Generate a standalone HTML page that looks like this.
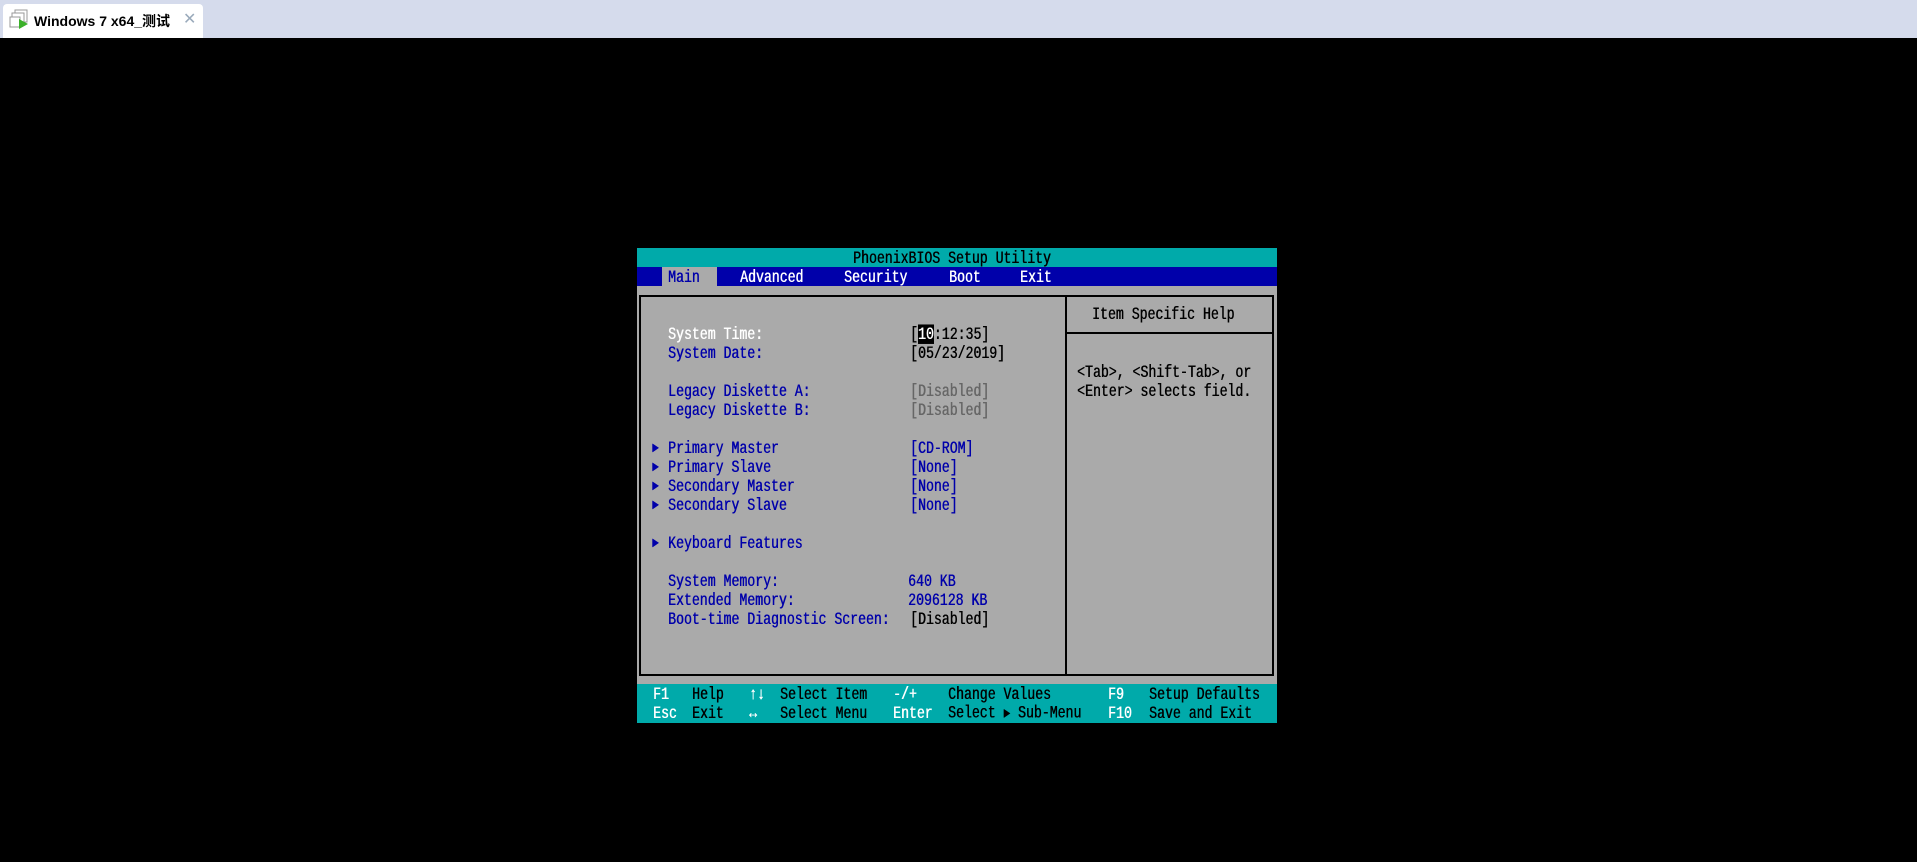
<!DOCTYPE html>
<html><head><meta charset="utf-8"><style>
*{margin:0;padding:0;box-sizing:border-box}
body{width:1917px;height:862px;background:#000;position:relative;overflow:hidden;font-family:"Liberation Mono",monospace}
#top{position:absolute;left:0;top:0;width:1917px;height:38px;background:#d5dbec}
#tab{position:absolute;left:3px;top:4px;width:200px;height:34px;background:#fff;border-radius:4px 4px 0 0}
#tab .t{position:absolute;left:31px;top:7px;font:bold 14px "Liberation Sans","Noto Sans CJK SC",sans-serif;color:#000}
#tab .x{position:absolute;left:180px;top:5px;font:16px "Liberation Sans",sans-serif;color:#9aaabb}
.a{position:absolute;white-space:pre;font-size:13.2px;line-height:19px;height:19px;margin-top:1px;text-shadow:0.4px 0 0 currentColor}
.s{display:inline-block;transform:scaleY(1.3);transform-origin:50% 55%}
.w{color:#fff}.b{color:#0000aa}.k{color:#000}.g{color:#666}
.tri{font-size:11px}
</style></head><body>
<div id="top"><div id="tab">
<svg style="position:absolute;left:6px;top:5px" width="22" height="22" viewBox="0 0 22 22"><rect x="6" y="1" width="12" height="12" fill="#fff" stroke="#999"/><rect x="3" y="4" width="12" height="12" fill="#fff" stroke="#999"/><rect x="1" y="8" width="10" height="10" fill="#fff" stroke="#999"/><path d="M10 10 L19 15 L10 20Z" fill="#3bb02a"/></svg>
<div class="t">Windows 7 x64_测试</div><div class="x">✕</div></div></div>

<div style="position:absolute;left:637px;top:248px;width:640px;height:475px;background:#aaaaaa"></div>
<div style="position:absolute;left:637px;top:248px;width:640px;height:19px;background:#00aaaa"></div>
<div style="position:absolute;left:637px;top:267px;width:640px;height:19px;background:#0000aa"></div>
<div style="position:absolute;left:662px;top:267px;width:55px;height:19px;background:#aaaaaa"></div>
<div style="position:absolute;left:639px;top:295px;width:635px;height:381px;border:2px solid #000"></div>
<div style="position:absolute;left:1065px;top:295px;width:2px;height:381px;background:#000"></div>
<div style="position:absolute;left:1066px;top:332px;width:208px;height:2px;background:#000"></div>
<div style="position:absolute;left:637px;top:684px;width:640px;height:39px;background:#00aaaa"></div>

<div class="a k" style="left:853px;top:248px"><span class="s">PhoenixBIOS Setup Utility</span></div>
<div class="a b" style="left:668px;top:267px"><span class="s">Main</span></div>
<div class="a w" style="left:740px;top:267px"><span class="s">Advanced</span></div>
<div class="a w" style="left:844px;top:267px"><span class="s">Security</span></div>
<div class="a w" style="left:949px;top:267px"><span class="s">Boot</span></div>
<div class="a w" style="left:1020px;top:267px"><span class="s">Exit</span></div>

<div class="a k" style="left:1092px;top:304px"><span class="s">Item Specific Help</span></div>
<div class="a k" style="left:1077px;top:362px"><span class="s">&lt;Tab&gt;, &lt;Shift-Tab&gt;, or</span></div>
<div class="a k" style="left:1077px;top:381px"><span class="s">&lt;Enter&gt; selects field.</span></div>

<div class="a w" style="left:668px;top:324px"><span class="s">System Time:</span></div>
<div class="a k" style="left:910px;top:324px"><span class="s">[<span style="background:#000;color:#fff">10</span>:12:35]</span></div>
<div class="a b" style="left:668px;top:343px"><span class="s">System Date:</span></div>
<div class="a k" style="left:910px;top:343px"><span class="s">[05/23/2019]</span></div>
<div class="a b" style="left:668px;top:381px"><span class="s">Legacy Diskette A:</span></div>
<div class="a g" style="left:910px;top:381px"><span class="s">[Disabled]</span></div>
<div class="a b" style="left:668px;top:400px"><span class="s">Legacy Diskette B:</span></div>
<div class="a g" style="left:910px;top:400px"><span class="s">[Disabled]</span></div>
<div class="a b" style="left:652px;top:438px"><span class="s tri">►</span></div>
<div class="a b" style="left:668px;top:438px"><span class="s">Primary Master</span></div>
<div class="a b" style="left:910px;top:438px"><span class="s">[CD-ROM]</span></div>
<div class="a b" style="left:652px;top:457px"><span class="s tri">►</span></div>
<div class="a b" style="left:668px;top:457px"><span class="s">Primary Slave</span></div>
<div class="a b" style="left:910px;top:457px"><span class="s">[None]</span></div>
<div class="a b" style="left:652px;top:476px"><span class="s tri">►</span></div>
<div class="a b" style="left:668px;top:476px"><span class="s">Secondary Master</span></div>
<div class="a b" style="left:910px;top:476px"><span class="s">[None]</span></div>
<div class="a b" style="left:652px;top:495px"><span class="s tri">►</span></div>
<div class="a b" style="left:668px;top:495px"><span class="s">Secondary Slave</span></div>
<div class="a b" style="left:910px;top:495px"><span class="s">[None]</span></div>
<div class="a b" style="left:652px;top:533px"><span class="s tri">►</span></div>
<div class="a b" style="left:668px;top:533px"><span class="s">Keyboard Features</span></div>
<div class="a b" style="left:668px;top:571px"><span class="s">System Memory:</span></div>
<div class="a b" style="left:908px;top:571px"><span class="s">640 KB</span></div>
<div class="a b" style="left:668px;top:590px"><span class="s">Extended Memory:</span></div>
<div class="a b" style="left:908px;top:590px"><span class="s">2096128 KB</span></div>
<div class="a b" style="left:668px;top:609px"><span class="s">Boot-time Diagnostic Screen:</span></div>
<div class="a k" style="left:910px;top:609px"><span class="s">[Disabled]</span></div>

<div class="a w" style="left:653px;top:684px"><span class="s">F1</span></div>
<div class="a k" style="left:692px;top:684px"><span class="s">Help</span></div>
<div class="a w" style="left:749px;top:684px"><span class="s">↑↓</span></div>
<div class="a k" style="left:780px;top:684px"><span class="s">Select Item</span></div>
<div class="a w" style="left:893px;top:684px"><span class="s">-/+</span></div>
<div class="a k" style="left:948px;top:684px"><span class="s">Change Values</span></div>
<div class="a w" style="left:1108px;top:684px"><span class="s">F9</span></div>
<div class="a k" style="left:1149px;top:684px"><span class="s">Setup Defaults</span></div>
<div class="a w" style="left:653px;top:703px"><span class="s">Esc</span></div>
<div class="a k" style="left:692px;top:703px"><span class="s">Exit</span></div>
<div class="a w" style="left:749px;top:703px"><span class="s">↔</span></div>
<div class="a k" style="left:780px;top:703px"><span class="s">Select Menu</span></div>
<div class="a w" style="left:893px;top:703px"><span class="s">Enter</span></div>
<div class="a k" style="left:948px;top:703px"><span class="s">Select <span class="tri">►</span> Sub-Menu</span></div>
<div class="a w" style="left:1108px;top:703px"><span class="s">F10</span></div>
<div class="a k" style="left:1149px;top:703px"><span class="s">Save and Exit</span></div>
</body></html>
